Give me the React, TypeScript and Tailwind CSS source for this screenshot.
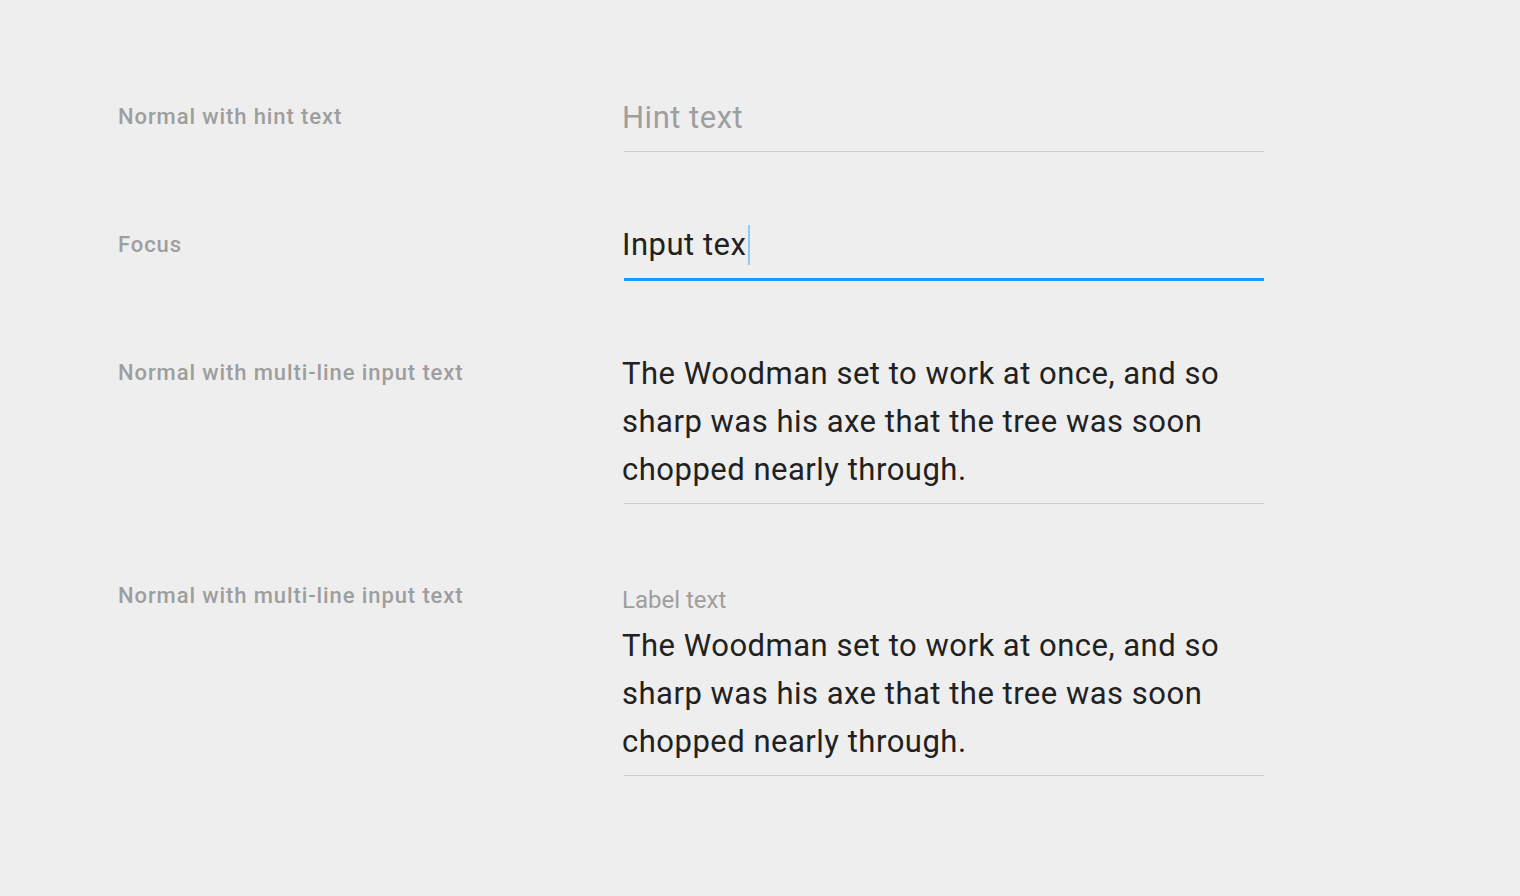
import React from "react";

const font = { fontFamily: "Roboto, 'Noto Sans', sans-serif" };

function Label({ children }: { children: React.ReactNode }) {
  return (
    <div className="w-[504px] shrink-0 text-[22px] leading-[48px] font-medium tracking-[0.9px] text-[#9e9e9e]">
      {children}
    </div>
  );
}

function Body() {
  return (
    <>
      The Woodman set to work at once, and so
      <br />
      sharp was his axe that the tree was soon
      <br />
      chopped nearly through.
    </>
  );
}

export default function App() {
  return (
    <div
      className="w-[1520px] h-[896px] bg-[#eeeeee] overflow-hidden pl-[118px] pt-[93px] flex flex-col gap-[68px]"
      style={font}
    >
      <div className="flex">
        <Label>Normal with hint text</Label>
        <div className="w-[642px]">
          <div className="pt-px text-[31px] leading-[48px] tracking-[0.5px] text-[#9e9e9e]">Hint text</div>
          <div className="mt-[9px] ml-[2px] h-px bg-[#cccccc]" />
        </div>
      </div>

      <div className="flex">
        <Label>
          <div className="pt-px">Focus</div>
        </Label>
        <div className="w-[642px]">
          <div className="pt-px text-[31px] leading-[48px] tracking-[0.5px] text-[#212121] flex items-center">
            <span>Input tex</span>
            <span className="ml-[2px] w-[2px] h-[40px] bg-[#90caf9]" />
          </div>
          <div className="mt-[9px] ml-[2px] h-[3px] bg-[#2196f3]" />
        </div>
      </div>

      <div className="flex">
        <Label>Normal with multi-line input text</Label>
        <div className="w-[642px]">
          <div className="pt-px text-[31px] leading-[48px] tracking-[0.5px] text-[#212121]">
            <Body />
          </div>
          <div className="mt-[9px] ml-[2px] h-px bg-[#cccccc]" />
        </div>
      </div>

      <div className="flex">
        <Label>Normal with multi-line input text</Label>
        <div className="w-[642px] pt-[12px]">
          <div className="text-[24px] leading-[32px] text-[#9e9e9e]">Label text</div>
          <div className="mt-[5px] pt-px text-[31px] leading-[48px] tracking-[0.5px] text-[#212121]">
            <Body />
          </div>
          <div className="mt-[9px] ml-[2px] h-px bg-[#cccccc]" />
        </div>
      </div>
    </div>
  );
}
